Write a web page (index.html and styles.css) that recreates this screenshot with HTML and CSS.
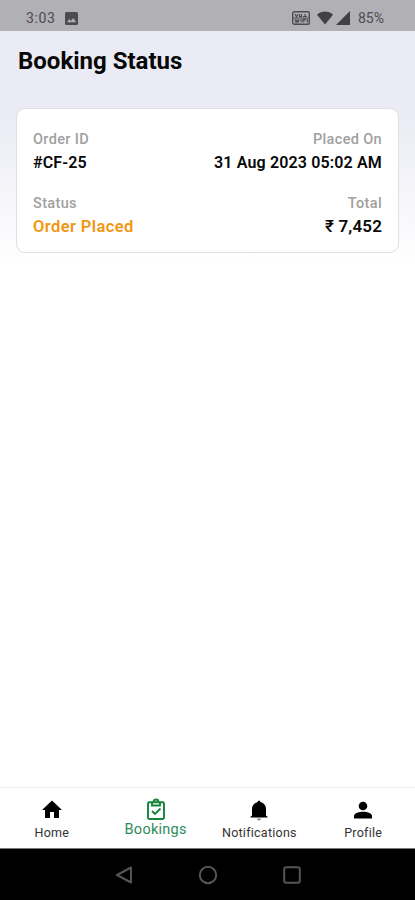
FILE: index.html
```html
<!DOCTYPE html>
<html lang="en">
<head>
  <meta charset="UTF-8" />
  <meta name="viewport" content="width=device-width, initial-scale=1.0" />
  <title>Booking Status</title>
  <link rel="stylesheet" href="styles.css">
</head>
<body>
  <div class="status-bar">
    <div class="status-left">
      <span class="time">3:03</span>
      <svg width="13" height="13" viewBox="0 0 13 13">
        <rect width="13" height="13" rx="1.5" fill="#4b4b50"/>
        <path d="M2 10.2 4.3 7.1 6 9 8.3 6 11.2 10.2z" fill="#b0b0b5"/>
      </svg>
    </div>
    <div class="status-right">
      <svg width="18" height="14" viewBox="0 0 18 14" fill="none" stroke="#4b4b50">
        <rect x=".7" y=".7" width="16.6" height="12.6" rx="1.5" stroke-width="1.4"/>
        <path d="M3 3l1.5 3L6 3M7.5 3v2.7h2V3M11 5.5h4M13 3v3M3 8.2l1 3 1-2.3 1 2.3 1-3M9 8v3.5M11 11.5V8.4h3M11 10h2.5M15.3 8v3.5" stroke-width="1.2"/>
        <path d="M1 7h16" stroke-width="1"/>
      </svg>
      <svg class="wifi" width="16" height="14" viewBox="0 0 16 14" fill="#404045">
        <path d="M0 3.7C4.5-.5 11.5-.5 16 3.7L8 13.5z"/>
      </svg>
      <svg class="signal" width="14" height="14" viewBox="0 0 14 14" fill="#404045">
        <path d="M14 0v14H0z"/>
      </svg>
      <span class="battery">85%</span>
    </div>
  </div>

  <main>
    <h1>Booking Status</h1>
    <div class="card">
      <div class="row">
        <div class="field">
          <div class="label">Order ID</div>
          <div class="value">#CF-25</div>
        </div>
        <div class="field right">
          <div class="label">Placed On</div>
          <div class="value">31 Aug 2023 05:02 AM</div>
        </div>
      </div>
      <div class="row">
        <div class="field">
          <div class="label">Status</div>
          <div class="value placed">Order Placed</div>
        </div>
        <div class="field right">
          <div class="label">Total</div>
          <div class="value total"><span class="rupee">₹</span> 7,452</div>
        </div>
      </div>
    </div>
  </main>

  <nav class="tabs">
    <a class="tab">
      <svg width="24" height="24" viewBox="0 0 24 24" fill="#000"><path d="M10 20v-6h4v6h5v-8h3L12 2.5 2 12h3v8z"/></svg>
      <span>Home</span>
    </a>
    <a class="tab active">
      <svg width="24" height="24" viewBox="0 0 24 24" fill="none" stroke="#16833b" stroke-width="1.9">
        <rect x="4" y="4.3" width="16" height="16.7" rx="1.2"/>
        <path d="M8 4v3.5h8V4"/>
        <path d="M9.5 4a2.5 2.5 0 0 1 5 0"/>
        <path d="M8 13l3 3 5.5-5.5"/>
      </svg>
      <span>Bookings</span>
    </a>
    <a class="tab">
      <svg width="24" height="24" viewBox="0 0 24 24" fill="#000">
        <path d="M19 17.5V11c0-3.3-2-6-5.2-6.7L12 2.3l-1.8 2C7 5 5 7.700 5 11v6.500l-1.500 1.200v.8h17v-.8z"/>
        <path d="M10 20.5h4a2 2 0 0 1-4 0z" fill="#888"/>
      </svg>
      <span>Notifications</span>
    </a>
    <a class="tab">
      <svg width="24" height="24" viewBox="0 0 24 24" fill="#000"><circle cx="12" cy="8" r="4.3"/><path d="M3 20.5V18c0-3 5.500-4.300 9-4.300s9 1.300 9 4.300v2.500z"/></svg>
      <span>Profile</span>
    </a>
  </nav>

  <div class="system-nav">
    <svg width="18" height="20" viewBox="0 0 18 20"><path d="M16 2.5v15L2 10z"/></svg>
    <svg width="20" height="20" viewBox="0 0 20 20"><circle cx="10" cy="10" r="8.2"/></svg>
    <svg width="18" height="20" viewBox="0 0 18 20"><rect x="1.2" y="2.2" width="15.6" height="15.6" rx="2"/></svg>
  </div>
</body>
</html>
```

FILE: styles.css
```css
* {
  box-sizing: border-box;
}
body {
  margin: 0;
  height: 900px;
  display: flex;
  flex-direction: column;
  overflow: hidden;
  background: #fff;
  color: #080808;
  font-family: Roboto, sans-serif;
}
svg {
  display: block;
  flex: none;
}
.status-bar {
  height: 31px;
  padding: 5px 29px 0 26px;
  display: flex;
  align-items: center;
  justify-content: space-between;
  background: #b0b0b5;
  color: #4b4b50;
  font-size: 14px;
}
.status-left,
.status-right {
  display: flex;
  align-items: center;
}
.time {
  width: 39px;
  letter-spacing: 0.6px;
}
.wifi {
  margin-left: 7px;
}
.signal {
  margin-left: 3px;
}
.battery {
  width: 28px;
  margin-left: 8px;
}
main {
  flex: 1;
  padding: 16px 16px 0;
  background: linear-gradient(#ebebf5 0, #ebebf5 85px, #fff 235px);
}
h1 {
  margin: 0 0 33px 2px;
  font-size: 24px;
  line-height: 28px;
  font-weight: 700;
}
.card {
  height: 145px;
  padding: 20px 16px 0;
  background: #fff;
  border: 1px solid #dfdfe4;
  border-radius: 9px;
}
.row {
  display: flex;
  justify-content: space-between;
  height: 64px;
}
.right {
  text-align: right;
}
.label {
  font-size: 14.5px;
  line-height: 22px;
  font-weight: 500;
  letter-spacing: 0.35px;
  color: #a0a0a0;
}
.value {
  font-size: 16px;
  line-height: 24px;
  font-weight: 600;
  letter-spacing: 0.15px;
  white-space: nowrap;
}
.placed {
  font-size: 16.5px;
  letter-spacing: 0.4px;
  color: #f2960f;
}
.total {
  font-size: 17px;
  line-height: 23px;
}
.rupee {
  font-weight: 500;
}
.tabs {
  height: 62px;
  display: flex;
  border-top: 1px solid #efefef;
  border-bottom: 1px solid #777;
  background: #fff;
}
.tab {
  flex: 1;
  padding-top: 10px;
  display: flex;
  flex-direction: column;
  align-items: center;
  font-size: 12.5px;
  line-height: 16px;
  letter-spacing: 0.25px;
  color: #333;
}
.tab span {
  margin-top: 3px;
}
.active {
  font-size: 14.5px;
  color: #2b8c5a;
}
.active span {
  margin-top: 0;
}
.system-nav {
  height: 51px;
  display: flex;
  align-items: center;
  justify-content: center;
  gap: 65px;
  background: #000;
}
.system-nav svg {
  fill: none;
  stroke: #555;
  stroke-width: 2;
  stroke-linejoin: round;
}
```
